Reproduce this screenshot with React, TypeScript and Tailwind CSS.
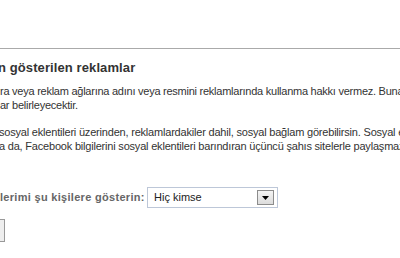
import React from "react";

export default function App() {
  return (
    <div
      className="w-[400px] h-[258px] overflow-hidden bg-white flex flex-col text-[#333]"
      style={{ fontFamily: '"Liberation Sans", Arial, sans-serif' }}
    >
      <div className="h-[48px] shrink-0" />
      <div className="h-px bg-[#aaaaaa] shrink-0" />
      <div className="mt-[11px] -ml-[2px] whitespace-nowrap text-[13px] leading-[16px] font-bold text-[#333] tracking-[0.1px]">
        n gösterilen reklamlar
      </div>
      <div className="mt-[8px] text-[11px] leading-[14px] whitespace-nowrap tracking-[-0.25px]">
        <div>ra veya reklam ağlarına adını veya resmini reklamlarında kullanma hakkı vermez. Buna izin verirsek</div>
        <div>ar belirleyecektir.</div>
      </div>
      <div className="mt-[13px] -ml-[1px] text-[11px] leading-[14px] whitespace-nowrap tracking-[-0.2px]">
        <div>sosyal eklentileri üzerinden, reklamlardakiler dahil, sosyal bağlam görebilirsin. Sosyal eklentiler</div>
        <div>a da, Facebook bilgilerini sosyal eklentileri barındıran üçüncü şahıs sitelerle paylaşmazlar.</div>
      </div>
      <div className="mt-[34px] flex items-center h-[21px] whitespace-nowrap">
        <span className="text-[11px] font-bold text-[#666] w-[147px] shrink-0 tracking-[0.3px]">lerimi şu kişilere gösterin:</span>
        <div className="w-[131px] h-[21px] shrink-0 border border-[#bdc7d8] bg-white flex items-center justify-between pl-[6px] pr-[3px]">
          <span className="text-[11px] text-[#222]">Hiç kimse</span>
          <div className="w-[17px] h-[15px] border border-[#8c8c8c] bg-gradient-to-b from-[#f4f4f4] to-[#dcdcdc] flex items-center justify-center">
            <svg width="7" height="4" viewBox="0 0 7 4">
              <path d="M0 0 H7 L3.5 4 Z" fill="#000" />
            </svg>
          </div>
        </div>
      </div>
      <div className="mt-[11px] -ml-[40px] w-[45px] h-[23px] border border-[#999] bg-[#eeeeee] shrink-0" />
    </div>
  );
}
